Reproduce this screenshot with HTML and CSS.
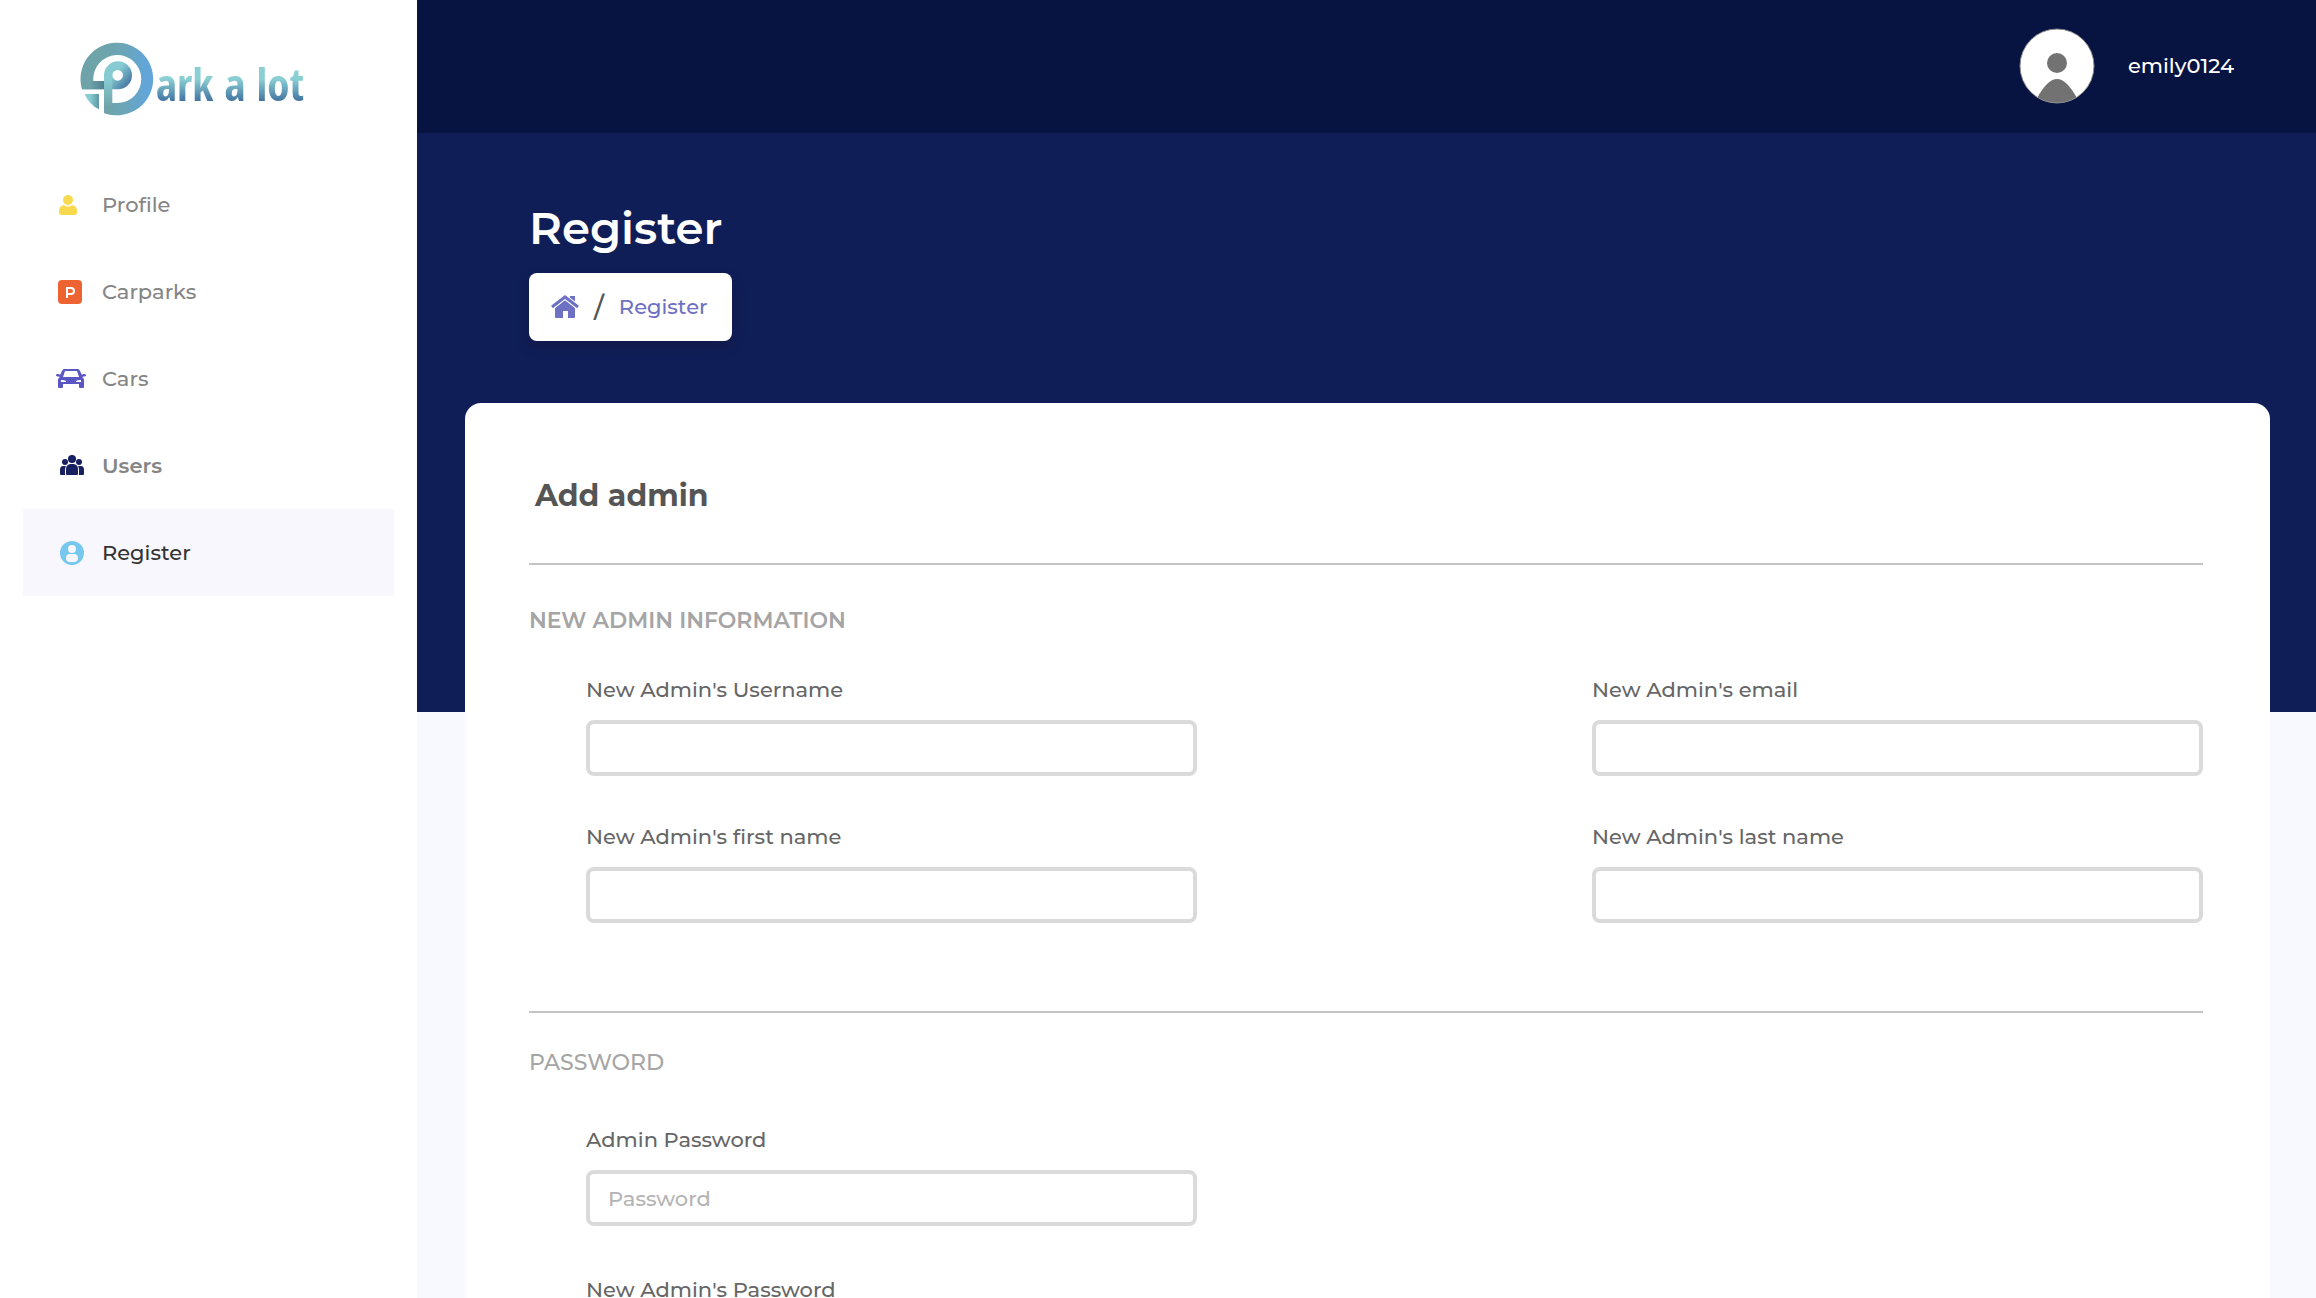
FILE: index.html
```html
<!DOCTYPE html>
<html lang="en">
<head>
<meta charset="utf-8">
<meta name="viewport" content="width=device-width, initial-scale=1">
<title>Register - Park a lot</title>
<link rel="stylesheet" href="styles.css">
</head>
<body>
<div class="app">
  <aside class="sidebar">
    <a class="logo" href="#">
      <svg class="logo-mark" viewBox="60 65 222 222" aria-hidden="true">
        <defs>
          <linearGradient id="ring" x1="0" y1="0" x2="1" y2="0"><stop offset="0.3" stop-color="#6ea3a9"/><stop offset="0.6" stop-color="#6ba5b8"/><stop offset="0.9" stop-color="#62a5d8"/></linearGradient>
          <linearGradient id="bowl" x1="0.1" y1="0.2" x2="0.9" y2="0.9"><stop offset="0.35" stop-color="#86cbd1"/><stop offset="1" stop-color="#42709f"/></linearGradient>
          <linearGradient id="stem" x1="0" y1="0" x2="0" y2="1"><stop offset="0.1" stop-color="#86cbd1"/><stop offset="0.8" stop-color="#6ea3a9"/></linearGradient>
          <linearGradient id="arm" x1="0" y1="0" x2="1" y2="0"><stop offset="0" stop-color="#6ea3a9"/><stop offset="0.4" stop-color="#6ea3a9"/><stop offset="1" stop-color="#4f8090"/></linearGradient>
          <linearGradient id="corner" x1="0" y1="0" x2="1" y2="0"><stop offset="0.4" stop-color="#86cbd1"/><stop offset="1" stop-color="#5d97a2"/></linearGradient>
        </defs>
        <path fill="url(#ring)" d="M66 207A109 109 0 1 1 132 278V248H171A72 72 0 1 0 100 182H132V207Z"/>
        <path fill="url(#arm)" d="M64 182H132V207H66Z"/>
        <path fill="url(#bowl)" fill-rule="evenodd" d="M132 207V165A42 42 0 1 1 174 207ZM173 149A16 16 0 1 0 173 181A16 16 0 1 0 173 149Z"/>
        <path fill="url(#stem)" d="M132 165H157V284L132 278Z"/>
        <path fill="url(#corner)" d="M74 221H117V267Q88 254 74 221Z"/>
      </svg>
      <span class="logo-text">ark a lot</span>
    </a>
    <nav class="nav">
      <a class="nav-item" href="#">
        <svg class="nav-icon" viewBox="0 0 32 32" aria-hidden="true"><g fill="#f9d94e"><circle cx="13" cy="11" r="5"/><path d="M9 16q4 3 8 0q5 1 5 6v1q0 3-3 3H7q-3 0-3-3v-1q0-5 5-6Z"/></g></svg>
        <span>Profile</span>
      </a>
      <a class="nav-item" href="#">
        <svg class="nav-icon" viewBox="0 0 32 32" aria-hidden="true"><rect x="3" y="4" width="24" height="24" rx="4" fill="#ed6331"/><path d="M12 22V12h4a3 3 0 0 1 0 6h-4" fill="none" stroke="#fff" stroke-width="2"/></svg>
        <span>Carparks</span>
      </a>
      <a class="nav-item" href="#">
        <svg class="nav-icon" viewBox="0 0 32 32" aria-hidden="true"><path fill="#5a57c4" fill-rule="evenodd" d="M9 6h14q1 0 2 2l2 4 1-1h2q1 0 1 2l-4 1q2 1 2 3v7q0 1-1 1h-3q-1 0-1-1v-3H8v3q0 1-1 1H4q-1 0-1-1v-7q0-2 2-3l-4-1q0-2 1-2h2l1 1 2-4q1-2 2-2ZM10 8L8 14h16l-2-6ZM6 17v2h5v-1q-1-1-5-1ZM26 17q-4 0-5 1v1h5Z"/></svg>
        <span>Cars</span>
      </a>
      <a class="nav-item strong" href="#">
        <svg class="nav-icon" viewBox="0 0 32 32" aria-hidden="true"><g fill="#18205f"><circle cx="17" cy="9" r="4"/><circle cx="10" cy="12" r="3"/><circle cx="24" cy="12" r="3"/><path d="M12 25q-1 0-1-1v-5q0-4 4-5h4q4 1 4 5v5q0 1-1 1ZM6 25q-1 0-1-1v-4q0-4 3-4h3q-1 2-1 4v5ZM28 25q1 0 1-1v-4q0-4-3-4h-3q1 2 1 4v5Z"/></g></svg>
        <span>Users</span>
      </a>
      <a class="nav-item active" href="#" aria-current="page">
        <svg class="nav-icon" viewBox="0 0 32 32" aria-hidden="true"><circle cx="17" cy="16" r="12" fill="#76c8ef"/><circle cx="17" cy="12" r="4" fill="#f7f7fd"/><rect x="11" y="17" width="12" height="8" rx="4" fill="#f7f7fd"/></svg>
        <span>Register</span>
      </a>
    </nav>
  </aside>

  <div class="content">
    <header class="topbar">
      <svg class="avatar" viewBox="0 0 76 76" aria-hidden="true">
        <defs><clipPath id="face"><circle cx="38" cy="38" r="37"/></clipPath></defs>
        <circle cx="38" cy="38" r="37" fill="#fff"/>
        <g clip-path="url(#face)" fill="#727272"><circle cx="38" cy="35" r="10"/><path d="M17 72Q28 51 38 51T59 72V76H17Z"/></g>
        <circle cx="38" cy="38" r="37" fill="none" stroke="#8a8a8a"/>
      </svg>
      <span class="username">emily0124</span>
    </header>

    <section class="hero">
      <h1>Register</h1>
      <nav class="breadcrumb" aria-label="Breadcrumb">
        <a href="#" aria-label="Home"><svg class="home-icon" viewBox="0 0 28 24" aria-hidden="true"><g fill="#6d70c3"><path d="M14 5l10 8v9q0 1-1 1h-6v-7h-5v7H5q-1 0-1-1v-9Z"/><path d="M19 1h5v9l-5-4Z"/></g><path d="M1 12L14 2l13 10" fill="none" stroke="#fff" stroke-width="5"/><path d="M1 12L14 2l13 10" fill="none" stroke="#6d70c3" stroke-width="3"/></svg></a>
        <span class="slash">/</span>
        <a href="#">Register</a>
      </nav>
    </section>

    <main class="card">
      <h2>Add admin</h2>
      <form>
        <section class="group">
          <h3>NEW ADMIN INFORMATION</h3>
          <div class="fields">
            <div class="field"><label for="username">New Admin's Username</label><input id="username" type="text"></div>
            <div class="field"><label for="email">New Admin's email</label><input id="email" type="email"></div>
            <div class="field"><label for="first">New Admin's first name</label><input id="first" type="text"></div>
            <div class="field"><label for="last">New Admin's last name</label><input id="last" type="text"></div>
          </div>
        </section>
        <section class="group password">
          <h3>PASSWORD</h3>
          <div class="fields">
            <div class="field"><label for="current">Admin Password</label><input id="current" type="password" placeholder="Password"></div>
            <div class="field"><label for="new">New Admin's Password</label><input id="new" type="password"></div>
          </div>
        </section>
      </form>
    </main>
  </div>
</div>
</body>
</html>
```
FILE: styles.css
```css
* { box-sizing: border-box; }

body {
  margin: 0;
  font-family: Montserrat, Inter, sans-serif;
  font-size: 21px;
  line-height: 28px;
  font-weight: 500;
  color: #666;
  background: #f8f8ff;
}

h1, h2, h3 { margin: 0; }
a { color: inherit; text-decoration: none; }

.app {
  display: flex;
  height: 100vh;
}

.sidebar {
  flex: 0 0 417px;
  background: #fff;
}

.logo {
  display: flex;
  align-items: center;
  gap: 2px;
  height: 161px;
  padding: 0 0 4px 80px;
}

.logo-mark {
  width: 74px;
  height: 74px;
}

.logo-text {
  padding-top: 10px;
  font-family: "Open Sans Condensed", "Liberation Sans Narrow", "Open Sans", sans-serif;
  font-size: 45px;
  line-height: 48px;
  font-weight: 700;
  color: transparent;
  background: linear-gradient(#8acfd3 50%, #3f6f9f 90%);
  background-clip: text;
}

.nav { padding: 0 23px; }

.nav-item {
  display: flex;
  align-items: center;
  gap: 15px;
  height: 87px;
  padding-left: 32px;
  color: #858585;
}

.nav-item.strong { font-weight: 600; }

.nav-item.active {
  color: #333;
  background: #f7f7fd;
}

.nav-icon {
  width: 32px;
  height: 32px;
}

.content {
  flex: 1;
  min-width: 0;
  overflow-y: auto;
  scrollbar-width: none;
}

.topbar {
  display: flex;
  align-items: center;
  justify-content: flex-end;
  gap: 33px;
  height: 133px;
  padding: 0 82px 2px 0;
  color: #fff;
  background: #071340;
}

.avatar {
  width: 76px;
  height: 76px;
}

.hero {
  display: flex;
  flex-direction: column;
  align-items: flex-start;
  gap: 15px;
  height: 579px;
  padding: 65px 112px 0;
  background: #101e58;
}

.hero h1 {
  font-size: 45px;
  line-height: 60px;
  font-weight: 600;
  color: #fff;
}

.breadcrumb {
  display: flex;
  align-items: center;
  gap: 15px;
  height: 68px;
  padding: 0 24px 0 22px;
  border-radius: 8px;
  color: #6d70c3;
  background: #fff;
  box-shadow: 0 6px 12px rgba(20, 20, 50, 0.4);
}

.home-icon {
  display: block;
  width: 28px;
  height: 24px;
}

.slash {
  font-size: 28px;
  color: #555;
}

.card {
  position: relative;
  margin: -309px 46px 0 48px;
  padding: 64px 67px 64px 64px;
  border-radius: 16px;
  background: #fff;
}

.card h2 {
  padding: 9px 6px 47px;
  font-size: 30px;
  line-height: 40px;
  font-weight: 700;
  color: #555;
}

.group {
  padding-top: 40px;
  border-top: 2px solid #c4c4c4;
}

.group h3 {
  margin-bottom: 39px;
  font-size: 22px;
  line-height: 32px;
  font-weight: 600;
  color: #a5a5a5;
}

.fields {
  display: grid;
  grid-template-columns: repeat(2, minmax(0, 611px));
  justify-content: space-between;
  row-gap: 47px;
  padding-left: 57px;
}

.group + .group {
  margin-top: 88px;
  padding-top: 34px;
}

.password h3 {
  margin-bottom: 47px;
  font-weight: 500;
}

.password .fields {
  grid-template-columns: minmax(0, 611px);
  justify-content: start;
  row-gap: 50px;
}

.field {
  display: flex;
  flex-direction: column;
  gap: 16px;
}

input {
  width: 100%;
  height: 56px;
  padding: 0 18px;
  border: 4px solid #dadada;
  border-radius: 8px;
  font: inherit;
  color: #555;
  background: #fff;
}

input::placeholder {
  color: #b4b4b4;
  opacity: 1;
}
```
